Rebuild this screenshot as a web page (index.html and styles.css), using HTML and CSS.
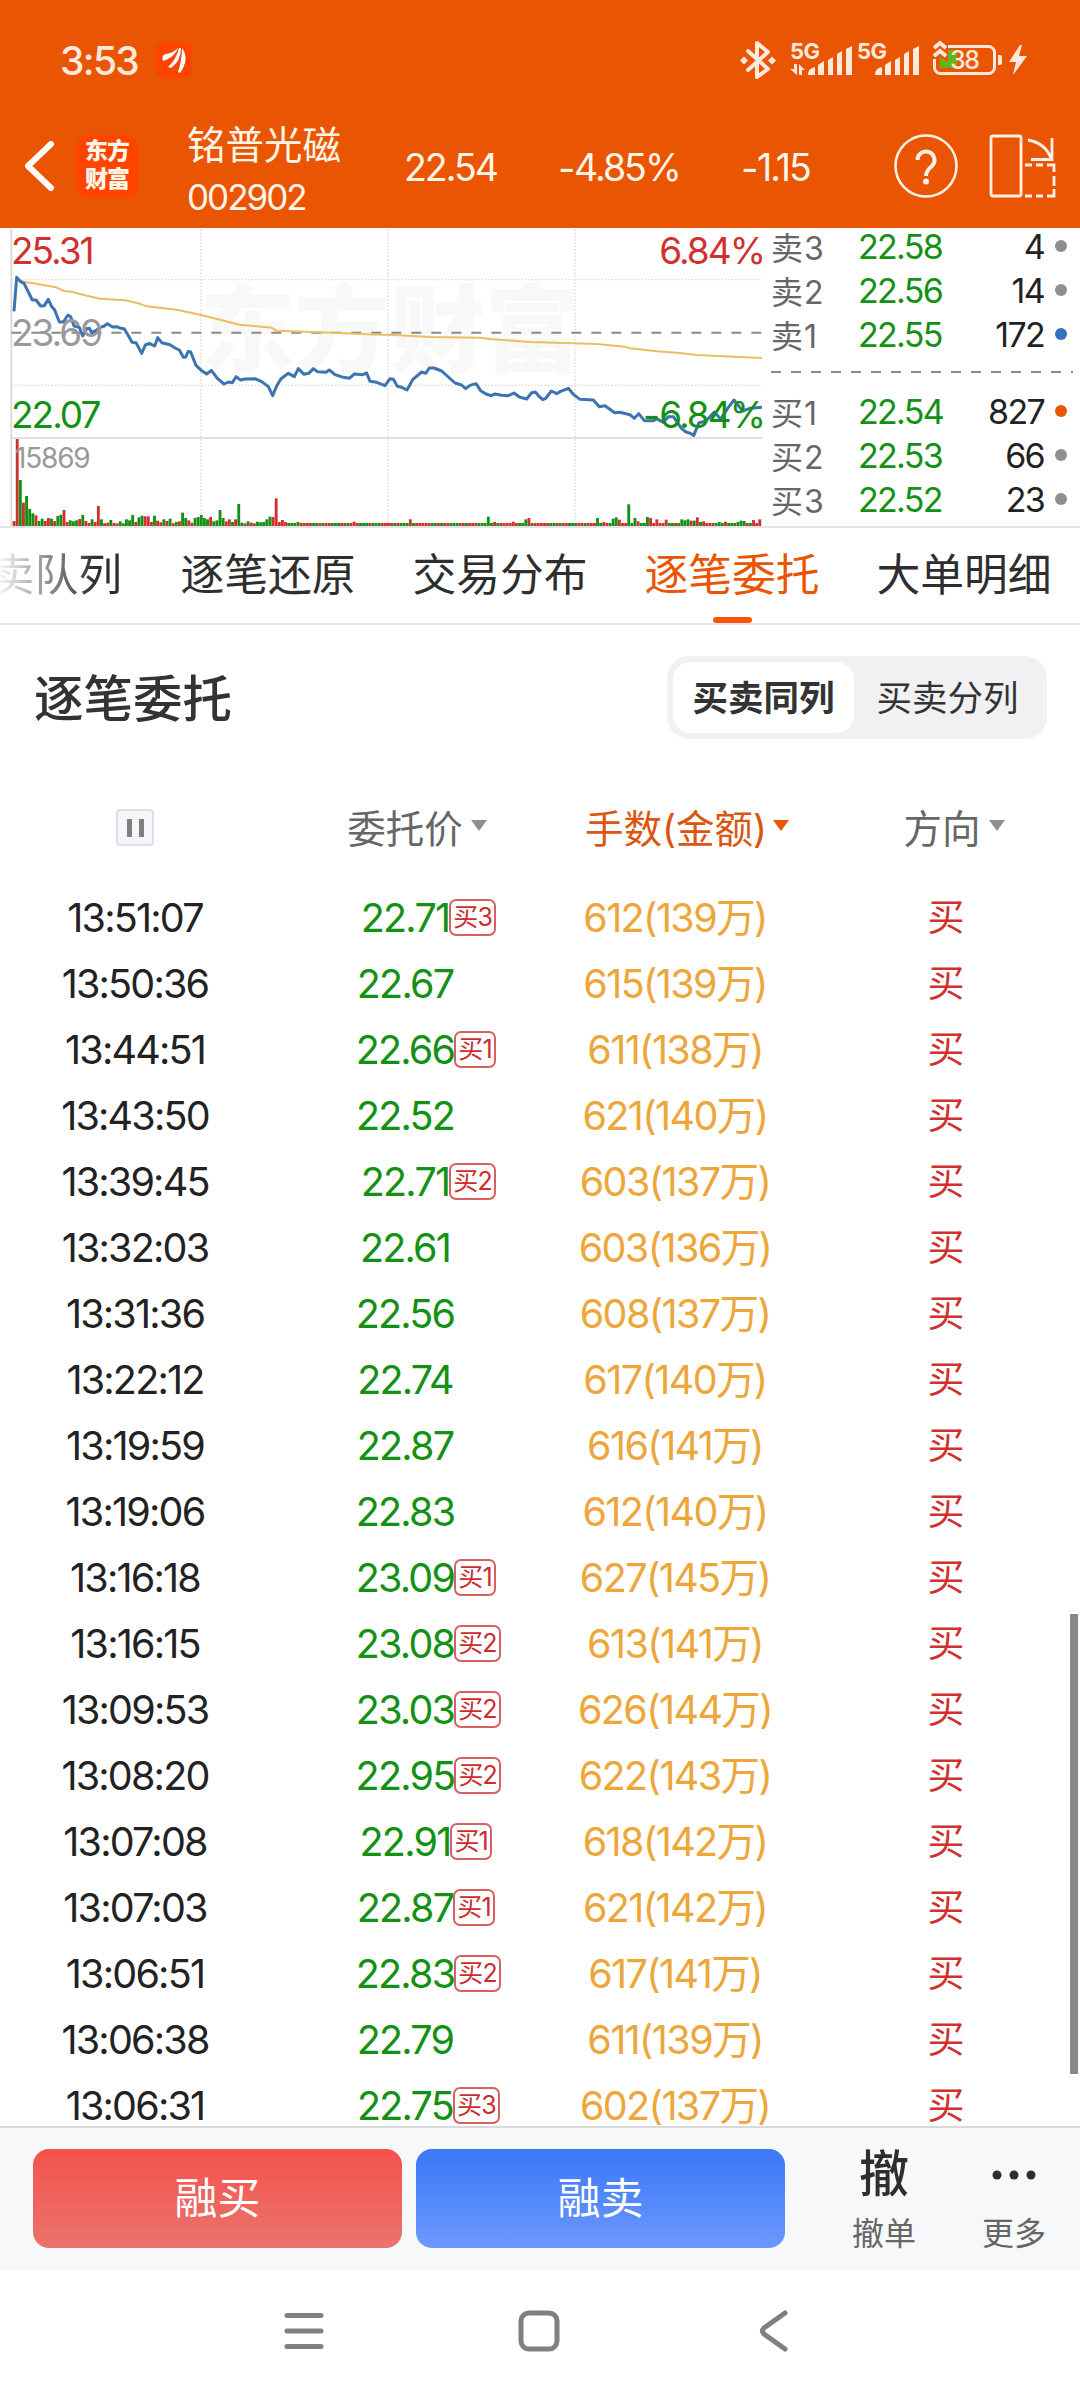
FILE: index.html
```html
<!DOCTYPE html>
<html lang="zh-CN">
<head>
    <meta charset="UTF-8">
    <meta name="viewport" content="width=device-width, initial-scale=1.0">
    <title>铭普光磁 002902</title>
    <link rel="stylesheet" href="styles.css">
</head>
<body>
    <header class="top">
        <div class="status">
            <span class="clock">3:53</span>
            <svg class="app" viewBox="0 0 36 36">
                <rect width="36" height="36" rx="7" fill="#ff4400"/>
                <path d="M7 19Q5 13 10 12Q17 11 22 6Q19 15 7 19ZM12 25Q20 18 23 6L25 6Q25 19 15 26ZM22 30Q26 18 26 6Q34 17 24 31Z" fill="#fff"/>
            </svg>
            <svg class="signals" viewBox="740 38 290 44">
                <g stroke="#ffe9dc" fill="none" stroke-width="4" stroke-linejoin="round" stroke-linecap="round">
                    <path d="M748 51L768 69L757 77V43L768 52L748 70"/>
                    <rect x="934.500" y="46.500" width="60" height="27" rx="6" stroke-width="3"/>
                </g>
                <g fill="#ffe9dc">
                    <path d="M740 60.500l4-4 4 4-4 4zM768 60.500l4-4 4 4-4 4z"/>
                    <text class="net" x="790" y="59">5G</text>
                    <text class="net" x="857" y="59">5G</text>
                    <path d="M808 75q0-7 7-8v8zM818 65l6-4v14h-6zM828 60l5-3v18h-5zM837 54l5-3v24h-5zM846 49l6-3v29h-6z"/>
                    <path d="M875 75q0-7 7-8v8zM885 65l6-4v14h-6zM895 60l5-3v18h-5zM904 54l5-3v24h-5zM913 49l6-3v29h-6z"/>
                    <path d="M794 64h3v11l-7-6h4zM799 75V64l6 6h-3v5z"/>
                    <path d="M998 55h2q2 0 2 2v6q0 2-2 2h-2z"/>
                    <path d="M1020 45L1009 62h7l-3 13 14-19h-8l3-11z"/>
                </g>
                <rect x="931" y="40" width="17" height="19" fill="#ea5504"/>
                <path d="M940 57l8 5V50h9v18h-17z" fill="#64b41a"/>
                <path d="M934 48l6-5 6 5M934 56l6-5 6 5" fill="none" stroke="#ffe9dc" stroke-width="4"/>
                <text class="pct" x="950" y="69">38</text>
            </svg>
        </div>
        <div class="quote">
            <svg class="back" viewBox="0 0 30 50"><path d="M26 3L3 25L26 47" fill="none" stroke="#fff" stroke-width="6" stroke-linecap="round" stroke-linejoin="round"/></svg>
            <div class="logo">东方<br>财富</div>
            <div class="stock">
                <div class="name">铭普光磁</div>
                <div class="code">002902</div>
            </div>
            <span class="q1">22.54</span>
            <span class="q2"><u>−</u>4.85%</span>
            <span class="q3"><u>−</u>1.15</span>
            <svg class="help" viewBox="0 0 64 64" fill="none" stroke="#fff0e4" stroke-width="2.600">
                <circle cx="32" cy="32" r="30.500"/>
                <path d="M23.500 26a8.500 8.500 0 1 1 14.500 6q-6 5-6 10" stroke-width="4"/>
                <circle cx="32" cy="47.500" r="3" fill="#fff0e4" stroke="none"/>
            </svg>
            <svg class="rotate" viewBox="0 0 68 64" fill="none" stroke="#fff0e4" stroke-width="2.800">
                <rect x="2" y="2" width="30" height="60" rx="2"/>
                <path d="M39 6q17 3 23 18M63 4v21.500H42"/>
                <path d="M36 31h7M47 31h7M58 31h7v7M65 42v10M65 55v7h-7M54 62h-7M43 62h-7"/>
            </svg>
        </div>
    </header>

    <section class="market">
        <div class="chart">
            <div class="mark">东方财富</div>
            <svg class="plot" viewBox="0 24 2295 897">
                <g class="grid">
                    <path d="M34 179H2286M34 496H2286M603 27V918M1164 27V918M1725 27V918"/>
                </g>
                <path d="M34 27V918M34 654H2286" stroke="#d6d6d6" stroke-width="5" fill="none"/>
                <path d="M34 338H2286" stroke="#888" stroke-width="6" stroke-dasharray="30 30" fill="none"/>
                <g id="bars"></g>
                <polyline class="avg" points="60,184 100,190 168,202 192,213 215,215 255,226 300,236 375,241 415,250 440,259 530,269 600,284 660,299 718,314 815,323 830,332 1000,338 1100,343 1200,346 1290,351 1440,353 1470,357 1590,366 1790,372 1875,380 1890,385 1970,394 2040,399 2090,405 2286,414"/>
                <polyline class="price" points="42,274 50,172 62,185 72,190 97,240 108,240 122,258 133,257 145,238 154,258 164,270 178,306 190,306 204,285 212,290 222,318 238,322 248,348 260,326 268,325 275,338 290,330 302,322 313,318 322,311 338,321 350,320 362,325 372,326 384,345 396,367 408,368 425,400 436,375 448,370 464,378 473,353 485,368 510,374 525,384 538,390 550,412 557,411 565,394 572,396 588,436 605,452 620,462 634,451 652,475 672,492 685,486 697,488 708,470 722,480 735,477 765,476 785,485 805,500 818,527 830,498 843,476 865,460 883,470 895,446 912,463 926,460 940,446 953,455 978,457 988,450 1005,464 1030,472 1048,475 1063,462 1088,464 1100,459 1110,484 1130,487 1155,497 1170,476 1180,478 1192,499 1205,502 1221,510 1238,479 1265,456 1277,460 1288,444 1302,444 1325,453 1365,489 1385,495 1397,506 1410,496 1428,491 1442,512 1458,522 1473,527 1485,522 1505,526 1525,527 1542,519 1558,531 1580,537 1595,518 1606,516 1618,530 1628,539 1637,535 1654,513 1670,521 1682,514 1705,505 1720,523 1740,538 1780,540 1798,560 1815,557 1844,578 1860,577 1890,584 1903,595 1916,581 1933,602 1960,602 1970,596 1990,607 2005,590 2020,590 2045,626 2058,636 2072,640 2081,647 2097,608 2118,603 2143,576 2162,597 2183,565 2202,540 2228,573 2250,565 2286,562"/>
            </svg>
            <span class="lab high">25.31</span>
            <span class="lab mid">23.69</span>
            <span class="lab low">22.07</span>
            <span class="lab up">6.84%</span>
            <span class="lab down"><u>−</u>6.84%</span>
            <span class="lab vol">15869</span>
        </div>
        <div class="book">
            <div class="level"><span>卖3</span><b>22.58</b><em>4</em><i></i></div>
            <div class="level"><span>卖2</span><b>22.56</b><em>14</em><i></i></div>
            <div class="level"><span>卖1</span><b>22.55</b><em>172</em><i class="blue"></i></div>
            <svg class="split" viewBox="0 0 302 4"><path d="M0 2H302" stroke="#8c8c8c" stroke-width="2" stroke-dasharray="10 10"/></svg>
            <div class="level"><span>买1</span><b>22.54</b><em>827</em><i class="orange"></i></div>
            <div class="level"><span>买2</span><b>22.53</b><em>66</em><i></i></div>
            <div class="level"><span>买3</span><b>22.52</b><em>23</em><i></i></div>
        </div>
    </section>

    <nav class="tabs">
        <a class="cut">卖队列</a>
        <a>逐笔还原</a>
        <a>交易分布</a>
        <a class="on">逐笔委托</a>
        <a>大单明细</a>
    </nav>

    <main class="orders">
        <div class="head">
            <h3>逐笔委托</h3>
            <div class="switch">
                <button class="on">买卖同列</button>
                <button>买卖分列</button>
            </div>
        </div>
        <div class="cols">
            <div><span class="pause"></span></div>
            <div>委托价<span class="tri"></span></div>
            <div class="sort">手数(金额)<span class="tri"></span></div>
            <div class="dir">方向<span class="tri"></span></div>
        </div>
        <div id="rows"></div>
        <div class="scroll"></div>
    </main>

    <footer class="trade">
        <button class="buy">融买</button>
        <button class="sell">融卖</button>
        <div class="act"><strong>撤</strong><span>撤单</span></div>
        <div class="act more">
            <svg viewBox="0 0 44 10" fill="#2e2e2e"><circle cx="5" cy="5" r="4.500"/><circle cx="22" cy="5" r="4.500"/><circle cx="39" cy="5" r="4.500"/></svg>
            <span>更多</span>
        </div>
    </footer>
    <div class="keys">
        <svg viewBox="0 0 42 42"><path d="M4 5.500H38M4 21H38M4 36.500H38"/></svg>
        <svg viewBox="0 0 42 42"><rect x="3" y="3" width="36" height="36" rx="8"/></svg>
        <svg viewBox="0 0 42 42"><path d="M32 3L11 18Q8 21 11 24L32 39"/></svg>
    </div>
    <script src="script.js"></script>
</body>
</html>
```
FILE: styles.css
```css
*{
    box-sizing: border-box;
}

body{
    margin: 0;
    width: 1080px;
    height: 2400px;
    display: flex;
    flex-direction: column;
    overflow: hidden;
    background-color: #fff;
    color: #222;
    font-family: Inter, "Noto Sans CJK SC", sans-serif;
}

button{
    border: 0;
    padding: 0;
    font-family: inherit;
}

svg{
    display: block;
    flex: none;
}

/* 減號比數字窄 */
u{
    display: inline-block;
    width: 14px;
    margin-right: 2px;
    text-decoration: none;
    transform: scaleX(0.7);
    transform-origin: left;
}

/* 頂部 */
.top{
    height: 228px;
    background-color: #ea5504;
    color: #fff6e8;
}

.status{
    display: flex;
    align-items: center;
    height: 120px;
    padding: 0 50px 0 60px;
}

.clock{
    width: 96px;
    font-size: 39px;
    font-weight: 500;
    letter-spacing: -1.7px;
    color: #ffe9dc;
}

.app{
    width: 36px;
    height: 36px;
}

.signals{
    width: 290px;
    height: 44px;
    margin-left: auto;
}

.net{
    font-size: 22px;
    font-weight: 700;
    letter-spacing: -0.5px;
}

.pct{
    font-size: 25px;
    font-weight: 500;
    letter-spacing: -1.5px;
    fill: #ffe9dc;
}

.quote{
    display: flex;
    align-items: center;
    height: 92px;
    padding-left: 25px;
    font-size: 37.5px;
    letter-spacing: -2px;
    white-space: nowrap;
}

.back{
    width: 30px;
    height: 50px;
}

.logo{
    width: 62px;
    height: 63px;
    margin-left: 21px;
    padding-top: 2px;
    border-radius: 12px;
    background-color: #ff4400;
    font-size: 23px;
    font-weight: 900;
    line-height: 28px;
    letter-spacing: -1px;
    text-align: center;
}

.stock{
    width: 217px;
    margin: 8px 0 0 49px;
}

.name{
    font-size: 38.5px;
    line-height: 54px;
    letter-spacing: 0;
}

.code{
    font-size: 35px;
    line-height: 50px;
}

.q1{
    width: 154px;
}

.q2{
    width: 183px;
}

.q3{
    width: 153px;
}

.q1, .q2, .q3{
    margin-top: 2px;
}

.help{
    width: 64px;
    height: 64px;
}

.rotate{
    width: 68px;
    height: 64px;
    margin-left: 31px;
}

/* 分時圖 */
.market{
    display: flex;
    height: 300px;
    border-bottom: 2px solid #e4e4e4;
}

.chart{
    position: relative;
    width: 765px;
    height: 299px;
}

.plot{
    position: absolute;
    left: 0;
    top: 0;
    width: 765px;
    height: 299px;
}

.mark{
    position: absolute;
    left: 200px;
    top: 34px;
    font-size: 95px;
    font-weight: 900;
    line-height: 138px;
    color: #f8f8f8;
}

.grid{
    fill: none;
    stroke: #dcdcdc;
    stroke-width: 4;
    stroke-dasharray: 5 5;
}

.avg{
    fill: none;
    stroke: #edbd62;
    stroke-width: 6;
}

.price{
    fill: none;
    stroke: #3c74b2;
    stroke-width: 9;
    stroke-linejoin: round;
}

.lab{
    position: absolute;
    left: 11px;
    font-size: 37px;
    line-height: 40px;
    letter-spacing: -2px;
}

.high, .up{
    top: 3px;
    color: #d0312f;
}

.mid{
    top: 85px;
    color: #999;
}

.low, .down{
    top: 167px;
    color: #149114;
}

.up, .down{
    left: auto;
    right: 1px;
}

.vol{
    top: 210px;
    left: 15px;
    font-size: 28px;
    letter-spacing: -1.2px;
    color: #999;
}

.book{
    width: 315px;
    padding: 0 13px 0 6px;
}

.level{
    display: flex;
    align-items: center;
    height: 44px;
    margin-top: -4px;
    margin-bottom: 4px;
    font-size: 34px;
    letter-spacing: -1.7px;
}

.level span{
    width: 87px;
    font-size: 32px;
    letter-spacing: 1px;
    color: #666;
}

.level b{
    width: 96px;
    font-weight: 400;
    color: #149114;
}

.level em{
    flex: 1;
    font-style: normal;
    text-align: right;
}

.level i{
    width: 12px;
    height: 12px;
    margin-left: 11px;
    border-radius: 50%;
    background-color: #8e8e93;
}

.level .blue{
    background-color: #2f72bd;
}

.level .orange{
    background-color: #ea5504;
}

.split{
    width: 302px;
    height: 4px;
    margin: 14px 0 19px;
}

/* 分頁 */
.tabs{
    position: relative;
    display: flex;
    height: 97px;
    margin-left: -80px;
    border-bottom: 2px solid #e4e4e4;
}

.tabs a{
    position: relative;
    flex: none;
    width: 232px;
    font-size: 43.8px;
    line-height: 95px;
    text-align: center;
    color: #2e2e2e;
}

.tabs .cut{
    padding-right: 30px;
    text-align: right;
    background: linear-gradient(90deg, #fff 75px, #2e2e2e 175px);
    -webkit-background-clip: text;
    background-clip: text;
    color: transparent;
}

.tabs .on{
    color: #ea5504;
}

.tabs .on::after{
    content: "";
    position: absolute;
    left: 97px;
    bottom: 0;
    width: 39px;
    height: 6px;
    border-radius: 3px;
    background-color: #fa5408;
}

/* 委托列表 */
.orders{
    position: relative;
    height: 1501px;
    overflow: hidden;
}

.head{
    display: flex;
    justify-content: space-between;
    align-items: center;
    height: 145px;
    padding: 0 33px 0 34px;
}

.head h3{
    margin: -5px 0 0;
    font-size: 49.5px;
    font-weight: 500;
    color: #333;
}

.switch{
    display: flex;
    width: 380px;
    height: 83px;
    padding: 6px;
    border-radius: 22px;
    background-color: #f1f1f4;
}

.switch button{
    width: 187px;
    padding-bottom: 5px;
    border-radius: 18px;
    background: none;
    font-size: 35.5px;
    color: #333;
}

.switch .on{
    width: 181px;
    background-color: #fff;
    font-weight: 700;
}

.cols{
    display: grid;
    grid-template-columns: repeat(4, 270px);
    height: 115px;
    font-size: 38.5px;
    color: #666;
}

.cols div{
    display: flex;
    justify-content: center;
    align-items: center;
    padding: 0 0 4px 24px;
}

.cols div:first-child{
    padding: 0;
}

.cols .sort{
    color: #dc5510;
}

.cols .dir{
    padding-left: 18px;
}

.tri{
    margin-left: 8px;
    border: 8.5px solid transparent;
    border-top: 11px solid #8e8e93;
    border-bottom: 0;
}

.sort .tri{
    margin-left: 6px;
    border-top-color: #ea5504;
}

.pause{
    display: flex;
    justify-content: center;
    align-items: center;
    gap: 7px;
    width: 38px;
    height: 37px;
    border: 2px solid #dcdfe6;
    border-radius: 4px;
    background-color: #f4f6f9;
}

.pause::before, .pause::after{
    content: "";
    width: 5px;
    height: 18px;
    background-color: #808080;
}

.row{
    display: grid;
    grid-template-columns: repeat(4, 270px);
    height: 66px;
    line-height: 66px;
    font-size: 39.5px;
    letter-spacing: -1.8px;
    text-align: center;
}

.row .cost{
    color: #149114;
}

.cost span{
    position: relative;
}

.tag{
    position: absolute;
    left: 100%;
    top: 5px;
    height: 37px;
    margin-left: 0;
    padding: 0 2px;
    border: 2px solid #d86060;
    border-radius: 7px;
    font-size: 25px;
    line-height: 32px;
    font-style: normal;
    letter-spacing: -0.8px;
    white-space: nowrap;
    color: #cc2c2c;
}

.row .hand{
    letter-spacing: -1.6px;
    color: #eda63a;
}

.row .side{
    font-size: 37px;
    color: #d0312f;
}

.scroll{
    position: absolute;
    left: 1070px;
    top: 989px;
    width: 8px;
    height: 460px;
    background-color: #888;
}

/* 底部 */
.trade{
    display: flex;
    height: 144px;
    padding: 21px 0 0 33px;
    border-top: 2px solid #d6d9dd;
    background-color: #f7f8fa;
}

.trade button{
    width: 369px;
    height: 99px;
    margin-right: 14px;
    padding-bottom: 7px;
    border-radius: 16px;
    font-size: 43px;
    color: #fff;
}

.buy{
    background: linear-gradient(#f4524c, #ec736d);
}

.sell{
    background: linear-gradient(#3b78f8, #6b98ff);
}

.act{
    width: 130px;
    margin-left: 20px;
    text-align: center;
    font-size: 32px;
    color: #666;
}

.act strong{
    display: block;
    height: 61px;
    font-size: 50px;
    line-height: 50px;
    font-weight: 500;
    color: #2e2e2e;
}

.act span{
    display: block;
    line-height: 48px;
}

.more{
    margin-left: 0;
}

.more svg{
    width: 44px;
    height: 10px;
    margin: 21px auto 30px;
}

.keys{
    display: flex;
    gap: 193px;
    height: 130px;
    padding: 40px 0 0 283px;
}

.keys svg{
    width: 42px;
    height: 42px;
    fill: none;
    stroke: #808080;
    stroke-width: 5;
    stroke-linecap: round;
}
```
FILE: script.js
```js
const orders = [
    ["13:51:07", "22.71", "买3", "612(139万)"],
    ["13:50:36", "22.67", "", "615(139万)"],
    ["13:44:51", "22.66", "买1", "611(138万)"],
    ["13:43:50", "22.52", "", "621(140万)"],
    ["13:39:45", "22.71", "买2", "603(137万)"],
    ["13:32:03", "22.61", "", "603(136万)"],
    ["13:31:36", "22.56", "", "608(137万)"],
    ["13:22:12", "22.74", "", "617(140万)"],
    ["13:19:59", "22.87", "", "616(141万)"],
    ["13:19:06", "22.83", "", "612(140万)"],
    ["13:16:18", "23.09", "买1", "627(145万)"],
    ["13:16:15", "23.08", "买2", "613(141万)"],
    ["13:09:53", "23.03", "买2", "626(144万)"],
    ["13:08:20", "22.95", "买2", "622(143万)"],
    ["13:07:08", "22.91", "买1", "618(142万)"],
    ["13:07:03", "22.87", "买1", "621(142万)"],
    ["13:06:51", "22.83", "买2", "617(141万)"],
    ["13:06:38", "22.79", "", "611(139万)"],
    ["13:06:31", "22.75", "买3", "602(137万)"]
];

document.querySelector("#rows").innerHTML = orders.map(([time, cost, tag, hand]) => `
    <div class="row">
        <div>${time}</div>
        <div class="cost"><span>${cost}${tag ? `<i class="tag">${tag}</i>` : ""}</span></div>
        <div class="hand">${hand}</div>
        <div class="side">买</div>
    </div>`).join("");

//開盤成交量，r 紅 g 綠
const opening = "r15 r261 g138 r70 g90 g51 g38 r32 g15 g22 r15 r24 g22 r15 g30 g34 r48 r12 g17 g14 g17 r21 g33 r15 r9 g20 r12 r60 g20 r8 r10 g18 r9 r8 g14 g8 g20 g17 g33 r12 g26 g31 r29 r29 r12 g31 r16 r11 g20 r15 g22 r8 g12 r14 g40 g24 r17 r10 g24 g27 g33 g24 g20 r27 g14 g17 g48 g24 r14 r20 g12 r20 g66 g10 r8 g14 r10 r8 g13 g11 g12 g20 g28 r27 r83 r12 r18 r12".split(" ");
const spikes = {
    91: "g12", 109: "r13", 127: "r20", 152: "g28", 154: "r12", 160: "r13", 164: "g20", 165: "r24",
    187: "g24", 189: "r12", 192: "g22", 193: "g26", 194: "r19", 197: "g65", 199: "g24", 200: "r14",
    203: "g27", 204: "r24", 206: "r20", 209: "r19", 214: "g20", 215: "g17", 216: "g20", 217: "r16",
    218: "g16", 219: "r26", 220: "g12", 221: "r14", 226: "g12", 228: "r13", 232: "g12", 233: "g16",
    234: "g15", 237: "r18", 238: "r9", 239: "r20"
};
const quiet = "rgggrrrrgrgggggrrrrrggrgrrgggrrgrrrggg";

let bars = "";
for (let i = 0; i < 240; i++){
    const bar = opening[i] || spikes[i] || quiet[i % quiet.length] + "9";
    const h = parseInt(bar.slice(1));
    bars += `<rect x="${38 + i * 9.36}" y="${918 - h}" width="8.6" height="${h}" fill="${bar[0] == "r" ? "#d0312f" : "#149114"}"/>`;
}
document.querySelector("#bars").innerHTML = bars;
```
